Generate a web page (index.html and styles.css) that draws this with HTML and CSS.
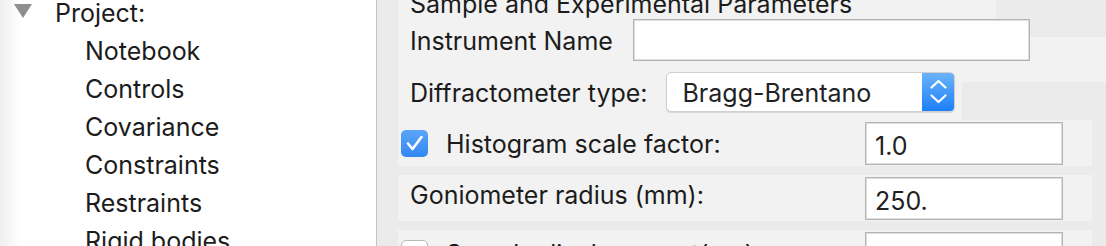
FILE: index.html
```html
<!DOCTYPE html>
<html lang="en">
<head>
    <meta charset="UTF-8">
    <title>Sample and Experimental Parameters</title>
    <link rel="stylesheet" href="styles.css">
</head>
<body>
    <div class="window">
        <div class="sidebar">
            <ul class="tree">
                <li class="node"><span class="twisty"></span>Project:</li>
                <li>Notebook</li>
                <li>Controls</li>
                <li>Covariance</li>
                <li>Constraints</li>
                <li>Restraints</li>
                <li>Rigid bodies</li>
            </ul>
        </div>
        <div class="pane">
            <div class="title-block">
                <div class="title">Sample and Experimental Parameters</div>
            </div>
            <div class="inst-block">
                <div class="inst-row">
                    <label for="inst">Instrument Name</label>
                    <input type="text" id="inst" class="field inst-field" value="">
                </div>
            </div>
            <div class="type-block">
                <div class="type-row">
                    <label>Diffractometer type:</label>
                    <div class="select">
                        <span class="select-text">Bragg-Brentano</span>
                        <span class="stepper">
                            <svg width="33" height="40" viewBox="0 0 33 40">
                                <path d="M9.5 15.5 L16.5 9 L23.5 15.5" fill="none" stroke="#fff" stroke-width="2.2" stroke-linecap="round" stroke-linejoin="round"/>
                                <path d="M9.5 23.5 L16.5 30 L23.5 23.5" fill="none" stroke="#fff" stroke-width="2.2" stroke-linecap="round" stroke-linejoin="round"/>
                            </svg>
                        </span>
                    </div>
                </div>
            </div>
            <div class="param-row">
                <span class="check on">
                    <svg width="27" height="27" viewBox="0 0 27 27">
                        <path d="M7 13.5 L11.5 19 L20.5 7" fill="none" stroke="#fff" stroke-width="2.6" stroke-linecap="round" stroke-linejoin="round"/>
                    </svg>
                </span>
                <label>Histogram scale factor:</label>
                <input type="text" class="field num" value="1.0">
            </div>
            <div class="param-row plain">
                <label class="raised">Goniometer radius (mm):</label>
                <input type="text" class="field num" value="250.">
            </div>
            <div class="param-row">
                <span class="check"></span>
                <label>Sample displacement(µm):</label>
                <input type="text" class="field num" value="0.0">
            </div>
        </div>
    </div>
</body>
</html>
```

FILE: styles.css
```css
body {
    margin: 0;
    padding: 0;
    font-family: Inter, "Noto Sans", sans-serif;
    font-size: 25px;
    color: #1c1c1c;
    background-color: #ebebeb;
}

.window {
    display: flex;
    height: 246px;
    overflow: hidden;
}

/* arbol de la izquierda */
.sidebar {
    width: 376px;
    flex-shrink: 0;
    border-right: 1px solid #c4c4c4;
    background: linear-gradient(to right, #efefef, #ffffff 22px);
}

.tree {
    list-style: none;
    margin: -6px 0 0 0;
    padding: 0 0 0 85px;
    line-height: 38px;
}

.tree .node {
    margin-left: -30px;
    position: relative;
}

.twisty {
    position: absolute;
    left: -41px;
    top: 10px;
    width: 0;
    height: 0;
    border-left: 9px solid transparent;
    border-right: 9px solid transparent;
    border-top: 14px solid #8e8e8e;
}

/* panel derecho */
.pane {
    flex: 1;
    padding-left: 21px;
    background-color: #ebebeb;
}

.title-block,
.inst-block,
.type-block {
    display: flow-root; /* que el margen negativo no se escape del bloque */
    background-color: #f2f2f2;
}

.title-block {
    width: 598px;
    height: 37px;
}

.title {
    padding-left: 12px;
    line-height: 26px;
    margin-top: -9px;
    white-space: nowrap;
}

.inst-block {
    height: 45px;
}

.inst-row {
    display: flex;
    align-items: center;
    gap: 20px;
    height: 42px;
    margin-top: -18px;
    padding-left: 12px;
}

.inst-row label {
    padding-top: 2px;
}

.type-block {
    width: 564px;
    height: 38px;
}

.type-row {
    display: flex;
    align-items: center;
    gap: 18px;
    height: 40px;
    margin-top: -10px;
    padding-left: 12px;
}

.type-row label {
    padding-top: 2px;
}

label {
    white-space: nowrap;
}

.field {
    box-sizing: border-box;
    font-family: Inter, "Noto Sans", sans-serif;
    font-size: 25px;
    color: #222;
    background-color: #fff;
    border: 1px solid #b4b4b4;
    box-shadow: inset 0 0 0 1px #dedede;
    outline: none;
    margin: 0;
}

.inst-field {
    width: 397px;
    height: 42px;
}

.select {
    display: flex;
    width: 289px;
    height: 40px;
    box-sizing: border-box;
    border-radius: 5px;
    background-color: #fff;
    border: 1px solid #cfcfcf;
    box-shadow: 0 1px 1px rgba(0, 0, 0, 0.12);
    overflow: hidden;
}

.select-text {
    flex: 1;
    padding-left: 16px;
    line-height: 40px;
    color: #222;
}

.stepper {
    width: 33px;
    height: 40px;
    margin: -1px -1px -1px 0;
    background: linear-gradient(to bottom, #6db4fa, #1a7ef6);
}

.stepper svg {
    display: block;
}

.param-row {
    display: flex;
    align-items: center;
    width: 694px;
    height: 46px;
    padding-left: 3px;
    box-sizing: border-box;
    background-color: #f2f2f2;
}

.param-row + .param-row {
    margin-top: 9px;
}

.param-row.plain {
    padding-left: 12px;
}

.param-row label {
    margin-left: 18px;
    padding-top: 2px;
}

.param-row.plain label {
    margin-left: 0;
}

.param-row label.raised {
    padding-top: 0;
    padding-bottom: 7px;
}

.check {
    width: 27px;
    height: 27px;
    box-sizing: border-box;
    border-radius: 5px;
    background-color: #fff;
    border: 1px solid #b9b9b9;
    flex-shrink: 0;
}

.check.on {
    border: none;
    background: linear-gradient(to bottom, #5aa5f8, #3288f2);
}

.check svg {
    display: block;
}

.num {
    width: 198px;
    height: 43px;
    margin-left: auto;
    margin-right: 29px;
    padding: 6px 0 0 9px;
}
```
